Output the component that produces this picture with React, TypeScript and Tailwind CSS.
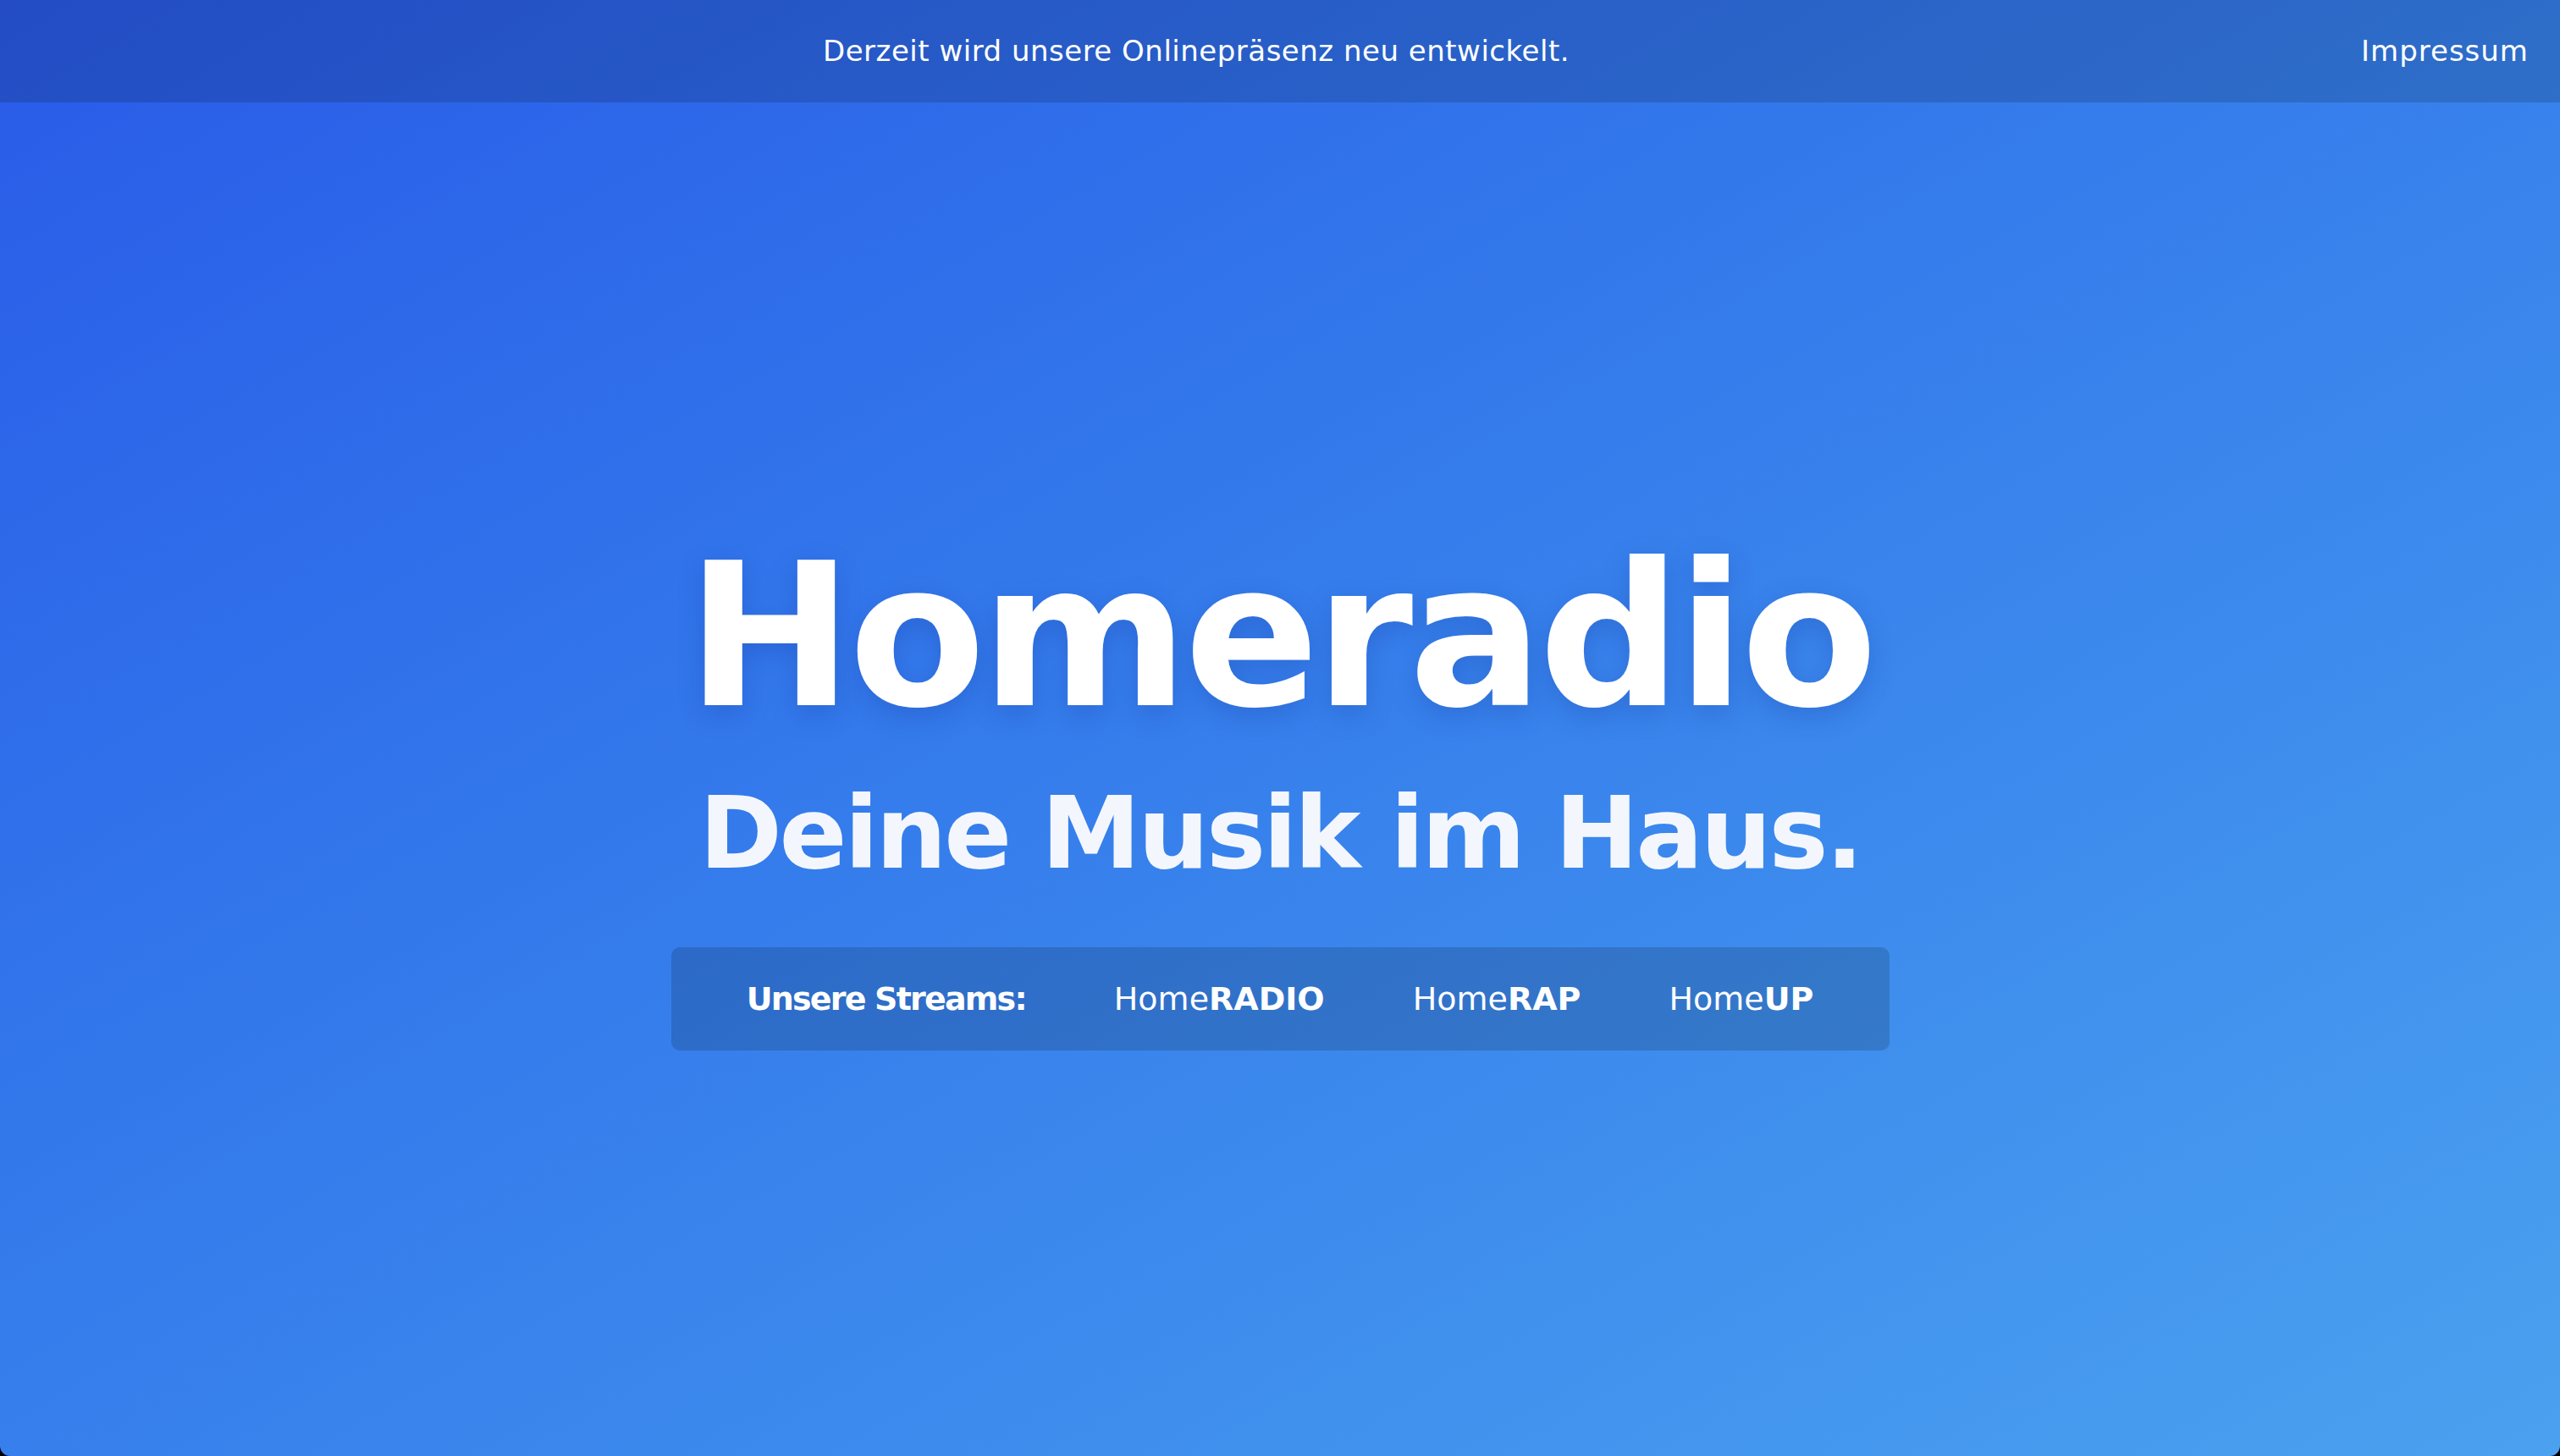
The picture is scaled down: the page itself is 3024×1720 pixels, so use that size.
import React from "react";

export default function App() {
  const font = { fontFamily: '"DejaVu Sans", "Liberation Sans", sans-serif' };
  return (
    <div className="w-[3024px] h-[1720px] bg-black overflow-hidden" style={font}>
      <div className="w-full h-full rounded-b-[12px] overflow-hidden bg-gradient-to-br from-[#2a5ae8] to-[#4ba1ef] flex flex-col">
        <header className="h-[121px] shrink-0 bg-black/15 flex items-center px-[37px] text-white text-[34px]">
          <p className="flex-1 text-center tracking-[0.5px]">Derzeit wird unsere Onlinepräsenz neu entwickelt.</p>
          <a className="tracking-[1px]">Impressum</a>
        </header>
        <main className="flex-1 flex flex-col items-center pt-[513px]">
          <h1 className="text-white font-bold text-[235px] leading-none tracking-[-5px] [text-shadow:0_10px_30px_rgba(20,50,150,0.25)]">
            Homeradio
          </h1>
          <h2 className="mt-[56px] text-[#f3f7fd] font-bold text-[118px] leading-none tracking-[-3.25px]">
            Deine Musik im Haus.
          </h2>
          <nav className="mt-[76px] w-[1439px] h-[122px] rounded-[10px] bg-black/15 flex items-center justify-center gap-[104px] text-white text-[38px]">
            <span className="font-bold tracking-[-1.8px]">Unsere Streams:</span>
            <a>Home<b>RADIO</b></a>
            <a>Home<b>RAP</b></a>
            <a>Home<b>UP</b></a>
          </nav>
        </main>
      </div>
    </div>
  );
}
